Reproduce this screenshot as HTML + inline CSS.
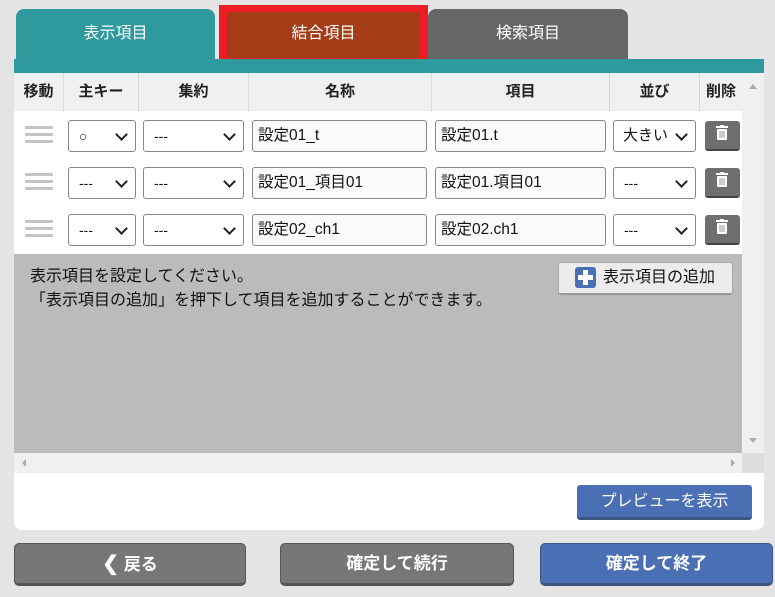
<!DOCTYPE html>
<html><head><meta charset="utf-8"><style>
*{box-sizing:border-box;margin:0;padding:0}
body{width:775px;height:597px;background:#e4e4e4;font-family:"Liberation Sans","Noto Sans CJK JP",sans-serif;position:relative;overflow:hidden}
.abs{position:absolute}
.tab{position:absolute;color:#fff;font-size:16px;text-align:center;line-height:50px;border-radius:8px 8px 0 0}
.panel{left:14px;top:59px;width:750px;height:471px;background:#fff;border-radius:0 0 8px 8px}
.hd{position:absolute;top:73px;height:38px;background:#f0f0f0;font-weight:bold;font-size:15px;text-align:center;line-height:38px;border-right:1px solid #d8d8d8;color:#222}
.sel{position:absolute;height:32px;border:1px solid #888;border-radius:3px;background:#fff;font-size:14px;padding-left:10px;line-height:30px;color:#111}
.sel:after{content:"";position:absolute;right:9px;top:9px;width:7px;height:7px;border-right:2px solid #222;border-bottom:2px solid #222;transform:rotate(45deg)}
.inp{position:absolute;height:32px;border:1px solid #888;border-radius:3px;background:#fafafa;font-size:15.5px;padding-left:5px;line-height:30px;color:#111}
.grip{position:absolute;left:25px;width:28px;height:3px;background:#c4c4c4;border-radius:1px}
.del{position:absolute;left:705px;width:35px;height:30px;background:#6f6f6f;border-radius:3px;border-bottom:2px solid #444}
.btn{position:absolute;top:543px;height:43px;border-radius:5px;color:#fff;font-weight:bold;font-size:17px;text-align:center;line-height:40px;border:1px solid #555;border-bottom:3px solid #555}
</style></head><body>
<div class="tab" style="left:16px;top:9px;width:199px;height:50px;background:#2e9a9e">表示項目</div>
<div class="abs" style="left:219px;top:5px;width:209px;height:60px;background:#ee1c25"></div>
<div class="abs" style="left:227px;top:12px;width:193px;height:46px;background:#a33c17;color:#fff;font-size:16px;text-align:center;line-height:44px">結合項目</div>
<div class="tab" style="left:428px;top:9px;width:200px;height:50px;background:#666">検索項目</div>
<div class="abs panel"></div>
<div class="abs" style="left:14px;top:59px;width:750px;height:14px;background:#2e9a9e"></div>
<div class="hd" style="left:14px;width:50px">移動</div>
<div class="hd" style="left:64px;width:75px">主キー</div>
<div class="hd" style="left:139px;width:110px">集約</div>
<div class="hd" style="left:249px;width:183px">名称</div>
<div class="hd" style="left:432px;width:178px">項目</div>
<div class="hd" style="left:610px;width:90px">並び</div>
<div class="hd" style="left:700px;width:42px;border:none">削除</div>
<div class="abs" style="left:742px;top:73px;width:22px;height:380px;background:#f0f0f0"></div>
<div class="abs" style="left:749px;top:84px;border:4px solid transparent;border-bottom:5px solid #aaa;border-top:none"></div>
<div class="abs" style="left:749px;top:438px;border:4px solid transparent;border-top:5px solid #aaa;border-bottom:none"></div>
<div class="abs" style="left:14px;top:254px;width:728px;height:199px;background:#bbb"></div>
<div class="abs" style="left:14px;top:453px;width:728px;height:20px;background:#f0f0f0"></div>
<div class="abs" style="left:742px;top:453px;width:22px;height:20px;background:#ddd"></div>
<div class="abs" style="left:22px;top:459px;border:4px solid transparent;border-right:4px solid #aaa;border-left:none"></div>
<div class="abs" style="left:731px;top:459px;border:4px solid transparent;border-left:4px solid #aaa;border-right:none"></div>

<div class="grip" style="top:126px"></div><div class="grip" style="top:133px"></div><div class="grip" style="top:140px"></div>
<div class="grip" style="top:173px"></div><div class="grip" style="top:180px"></div><div class="grip" style="top:187px"></div>
<div class="grip" style="top:220px"></div><div class="grip" style="top:227px"></div><div class="grip" style="top:234px"></div>

<div class="sel" style="left:68px;top:120px;width:68px">○</div>
<div class="sel" style="left:143px;top:120px;width:101px">---</div>
<div class="inp" style="left:252px;top:120px;width:175px">設定01_t</div>
<div class="inp" style="left:435px;top:120px;width:171px">設定01.t</div>
<div class="sel" style="left:613px;top:120px;width:83px;padding-left:9px;overflow:hidden;white-space:nowrap;font-size:15px">大きい</div>
<div class="del" style="top:121px"></div>

<div class="sel" style="left:68px;top:167px;width:68px">---</div>
<div class="sel" style="left:143px;top:167px;width:101px">---</div>
<div class="inp" style="left:252px;top:167px;width:175px">設定01_項目01</div>
<div class="inp" style="left:435px;top:167px;width:171px">設定01.項目01</div>
<div class="sel" style="left:613px;top:167px;width:83px">---</div>
<div class="del" style="top:168px"></div>

<div class="sel" style="left:68px;top:214px;width:68px">---</div>
<div class="sel" style="left:143px;top:214px;width:101px">---</div>
<div class="inp" style="left:252px;top:214px;width:175px">設定02_ch1</div>
<div class="inp" style="left:435px;top:214px;width:171px">設定02.ch1</div>
<div class="sel" style="left:613px;top:214px;width:83px">---</div>
<div class="del" style="top:215px"></div>

<svg class="abs" style="left:714px;top:125px" width="16" height="18"><g fill="#fff"><rect x="2" y="1" width="12" height="2"/><rect x="6" y="0" width="4" height="2"/><rect x="3" y="4" width="10" height="11" rx="1"/></g><path d="M6 6v7M8 6v7M10 6v7" stroke="#999"/></svg>
<svg class="abs" style="left:714px;top:172px" width="16" height="18"><g fill="#fff"><rect x="2" y="1" width="12" height="2"/><rect x="6" y="0" width="4" height="2"/><rect x="3" y="4" width="10" height="11" rx="1"/></g><path d="M6 6v7M8 6v7M10 6v7" stroke="#999"/></svg>
<svg class="abs" style="left:714px;top:219px" width="16" height="18"><g fill="#fff"><rect x="2" y="1" width="12" height="2"/><rect x="6" y="0" width="4" height="2"/><rect x="3" y="4" width="10" height="11" rx="1"/></g><path d="M6 6v7M8 6v7M10 6v7" stroke="#999"/></svg>

<div class="abs" style="left:30px;top:265px;font-size:16px;line-height:24px;color:#111">表示項目を設定してください。<br>「表示項目の追加」を押下して項目を追加することができます。</div>
<div class="abs" style="left:558px;top:262px;width:175px;height:33px;background:#ececec;border:1px solid #aaa;border-bottom:2px solid #999;border-radius:3px;font-size:16px;line-height:29px;padding-left:44px;color:#111">表示項目の追加</div>
<div class="abs" style="left:575px;top:267px;width:21px;height:21px;background:#4a6fb5;border-radius:3px"></div>
<div class="abs" style="left:583px;top:270px;width:5px;height:15px;background:#fff"></div>
<div class="abs" style="left:578px;top:275px;width:15px;height:5px;background:#fff"></div>

<div class="abs" style="left:577px;top:485px;width:175px;height:35px;background:#4a6fb5;border-radius:3px;border-bottom:3px solid #3f5680;color:#fff;font-size:16px;text-align:center;line-height:34px">プレビューを表示</div>

<div class="btn" style="left:14px;width:232px;background:#777"><span style="font-size:20px">❮</span> 戻る</div>
<div class="btn" style="left:280px;width:234px;background:#777">確定して続行</div>
<div class="btn" style="left:540px;width:233px;background:#4a6fb5;border-color:#3f5680">確定して終了</div>
</body></html>
